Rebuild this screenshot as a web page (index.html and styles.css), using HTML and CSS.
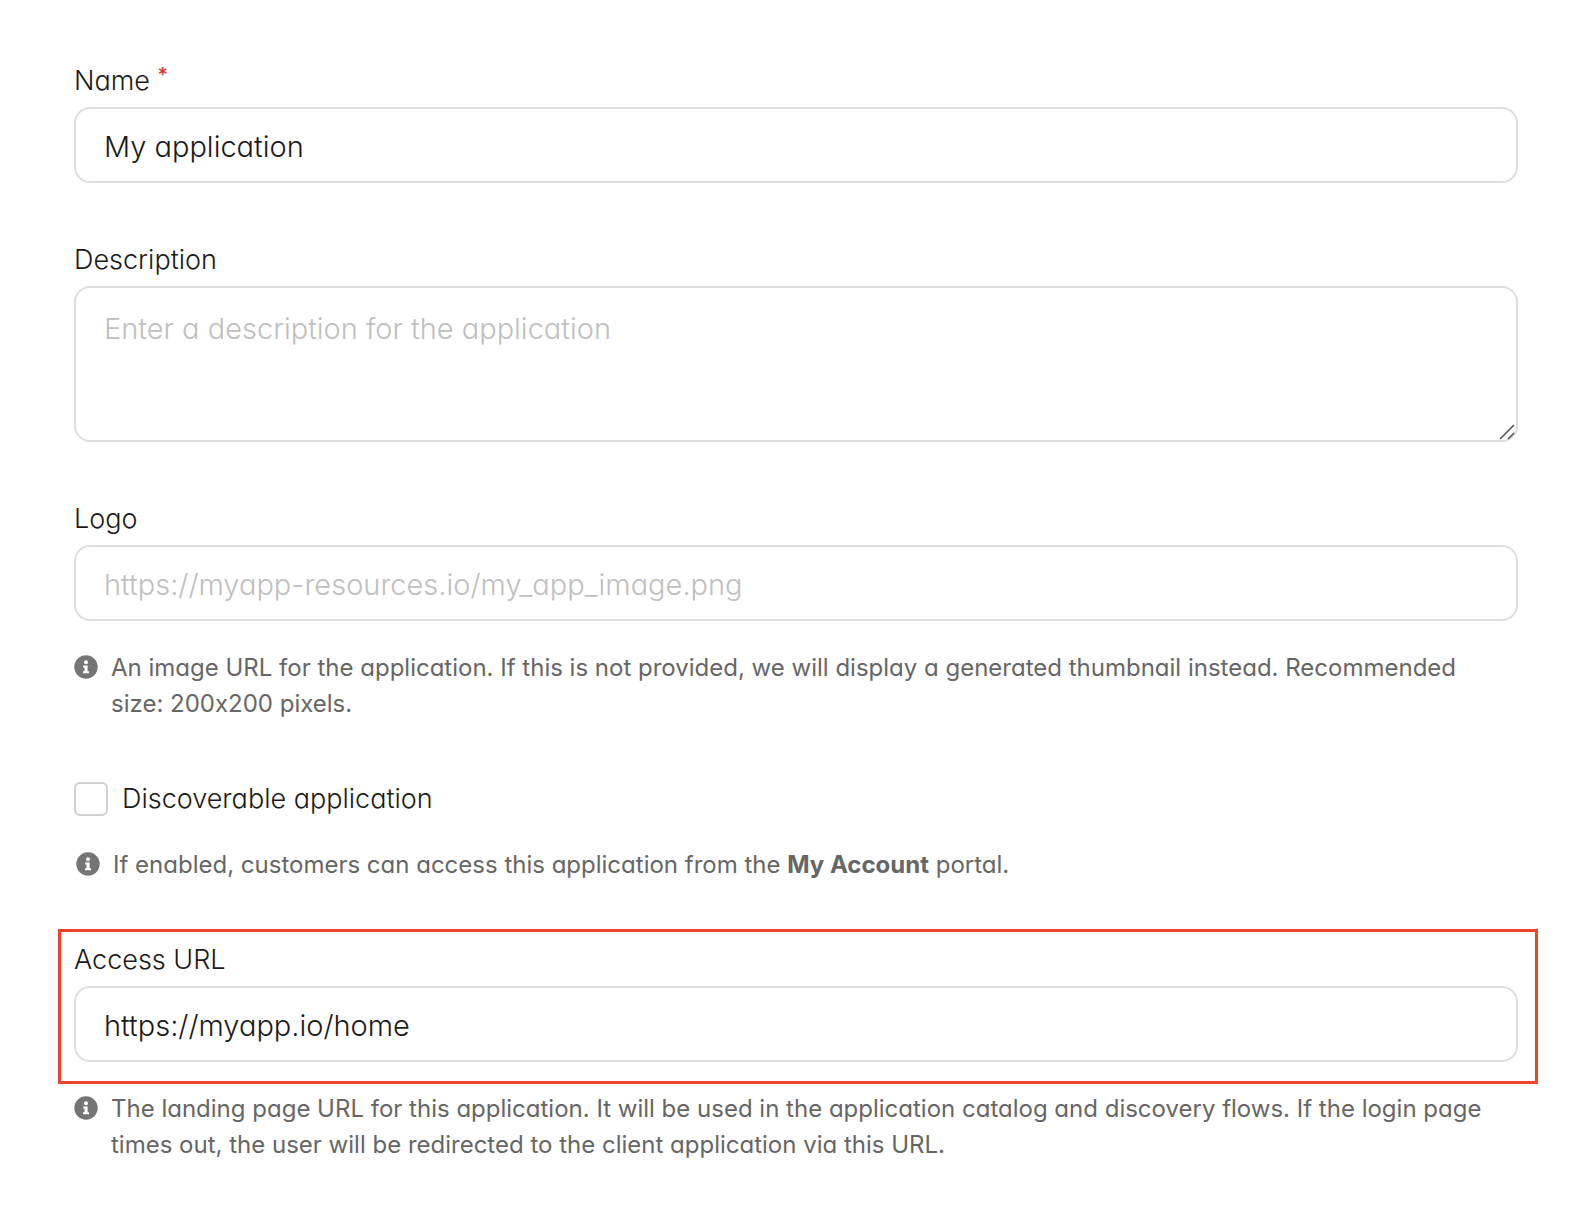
FILE: index.html
```html
<!DOCTYPE html>
<html lang="en">
<head>
    <meta charset="UTF-8">
    <meta name="viewport" content="width=device-width, initial-scale=1.0">
    <title>Application settings</title>
    <link rel="stylesheet" href="styles.css">
</head>
<body>

<svg class="sprite" aria-hidden="true">
    <symbol id="info" viewBox="0 0 24 24">
        <circle cx="12" cy="12" r="11.7" fill="#757575"/>
        <circle cx="12" cy="7.3" r="2" fill="#fff"/>
        <path d="M9.2 10.4h4.4v5.8h1.4v2H9v-2h1.5v-3.8H9.2z" fill="#fff"/>
    </symbol>
</svg>

<form class="app-form">
    <div class="field">
        <label for="name">Name <span class="required">*</span></label>
        <input type="text" id="name" class="control" value="My application">
    </div>

    <div class="field">
        <label for="description">Description</label>
        <div class="textarea-wrap">
            <textarea id="description" class="control" placeholder="Enter a description for the application"></textarea>
            <svg class="grip" viewBox="0 0 16 16" aria-hidden="true">
                <path d="M1 15L15 1M9 15l6-6" stroke="#555" stroke-width="1.6" fill="none"/>
            </svg>
        </div>
    </div>

    <div class="field">
        <label for="logo">Logo</label>
        <input type="text" id="logo" class="control" placeholder="https://myapp-resources.io/my_app_image.png">
        <div class="hint">
            <svg class="info-icon" aria-hidden="true"><use href="#info"/></svg>
            <p>An image URL for the application. If this is not provided, we will display a generated thumbnail instead. Recommended size: 200x200 pixels.</p>
        </div>
    </div>

    <div class="field">
        <div class="check-row">
            <input type="checkbox" id="discoverable" class="checkbox">
            <label for="discoverable">Discoverable application</label>
        </div>
        <div class="hint hint-check">
            <svg class="info-icon" aria-hidden="true"><use href="#info"/></svg>
            <p>If enabled, customers can access this application from the <strong>My Account</strong> portal.</p>
        </div>
    </div>

    <div class="field">
        <div class="highlight">
            <label for="access-url">Access URL</label>
            <input type="text" id="access-url" class="control" value="https://myapp.io/home">
        </div>
        <div class="hint hint-url">
            <svg class="info-icon" aria-hidden="true"><use href="#info"/></svg>
            <p>The landing page URL for this application. It will be used in the application catalog and discovery flows. If the login page times out, the user will be redirected to the client application via this URL.</p>
        </div>
    </div>
</form>

</body>
</html>
```
FILE: styles.css
```css
* {
    box-sizing: border-box;
}
body {
    margin: 0;
    background-color: #fff;
    color: #1a1a1a;
    font-family: Inter, "Liberation Sans", sans-serif;
    font-feature-settings: "cv11", "calt" 0;
    font-weight: 300;
}
.sprite {
    display: none;
}
.app-form {
    display: flex;
    flex-direction: column;
    gap: 59px;
    padding: 63px 70px 63px 74px;
}
label {
    display: block;
    font-size: 27px;
    line-height: 36px;
}
.required {
    font-size: 20px;
    line-height: 20px;
    vertical-align: 8px;
    font-weight: 500;
    color: #d9362f;
}
.control {
    display: block;
    width: 100%;
    height: 76px;
    margin: 8px 0 0;
    padding: 3px 28px 0;
    border: 2px solid #dedede;
    border-radius: 16px;
    background-color: #fff;
    color: #1a1a1a;
    font: inherit;
    font-feature-settings: inherit;
    font-size: 29px;
    outline: none;
}
.control::placeholder {
    color: #c0c0c0;
    opacity: 1;
}
.textarea-wrap {
    position: relative;
}
textarea.control {
    height: 156px;
    padding: 20px 28px;
    line-height: 42px;
    resize: none;
}
.grip {
    position: absolute;
    right: 3px;
    bottom: 2px;
    width: 16px;
    height: 16px;
}
.hint {
    display: flex;
    gap: 13px;
    margin-top: 29px;
    padding-right: 20px;
    color: #666;
    font-size: 24px;
    font-weight: 400;
    line-height: 36px;
}
.hint p {
    margin: 0;
}
.hint strong {
    font-weight: 700;
}
.info-icon {
    flex: none;
    width: 24px;
    height: 24px;
    margin-top: 5px;
}
.check-row {
    display: flex;
    align-items: center;
    gap: 14px;
}
.checkbox {
    appearance: none;
    width: 34px;
    height: 34px;
    margin: 0;
    border: 2px solid #d0d0d0;
    border-radius: 6px;
    background-color: #fff;
}
.checkbox:checked {
    background-color: #757575;
}
.hint-check {
    margin-top: 30px;
    padding-left: 2px;
}
/* frame reaches past the column so the input stays aligned with the others */
.highlight {
    margin: -13px -20px 0 -16px;
    padding: 10px 17px 19px 13px;
    border: 3px solid #ee442b;
}
.hint-url {
    margin-top: 7px;
}
```
